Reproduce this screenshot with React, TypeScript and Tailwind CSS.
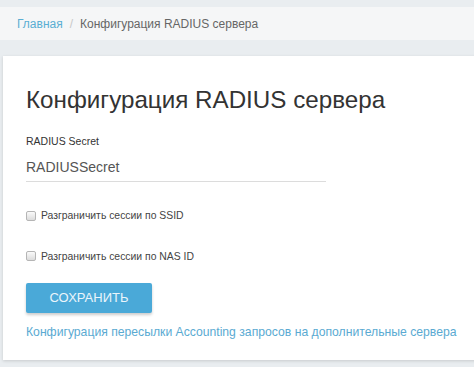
import React from "react";

export default function App() {
  return (
    <div
      className="w-[474px] h-[367px] overflow-hidden bg-[#e9edf0] pt-[7px]"
      style={{ fontFamily: '"Liberation Sans", Arial, sans-serif' }}
    >
      <div className="h-[33px] bg-[#f5f6f7] flex items-center pl-[17px] text-[12px]">
        <span className="text-[#5aaed3]">Главная</span>
        <span className="text-[#c8c8c8] mx-[7px]">/</span>
        <span className="text-[#666]">Конфигурация RADIUS сервера</span>
      </div>
      <div className="mt-[16px] ml-[3px] w-[490px] h-[304px] bg-white shadow-[0_1px_3px_rgba(0,0,0,0.15)] pl-[23px] pt-[29px]">
        <h1 className="text-[24.2px] leading-[30px] text-[#333]">Конфигурация RADIUS сервера</h1>
        <div className="mt-[19px] text-[10.5px] leading-[14px] text-[#333]">RADIUS Secret</div>
        <div className="mt-[9px] w-[300px] border-b border-[#dcdcdc] pb-[4px] text-[14px] leading-[20px] text-[#555]">
          RADIUSSecret
        </div>
        <label className="mt-[26px] flex items-center gap-[5px] text-[10.4px] text-[#444]">
          <span className="w-[10px] h-[10px] rounded-[2px] border border-[#b5b5b5] bg-gradient-to-b from-[#fafafa] to-[#dcdcdc]" />
          <span>Разграничить сессии по SSID</span>
        </label>
        <label className="mt-[25px] flex items-center gap-[5px] text-[10.4px] text-[#444]">
          <span className="w-[10px] h-[10px] rounded-[2px] border border-[#b5b5b5] bg-gradient-to-b from-[#fafafa] to-[#dcdcdc]" />
          <span>Разграничить сессии по NAS ID</span>
        </label>
        <button className="mt-[19px] w-[126px] h-[30px] rounded-[2px] bg-[#4aa9d8] text-[#eaf5fb] text-[13px] shadow-[0_2px_3px_rgba(0,0,0,0.2)]">
          СОХРАНИТЬ
        </button>
        <div className="mt-[11px] text-[12.2px] leading-[16px] text-[#5aaad2]">
          Конфигурация пересылки Accounting запросов на дополнительные сервера
        </div>
      </div>
    </div>
  );
}
